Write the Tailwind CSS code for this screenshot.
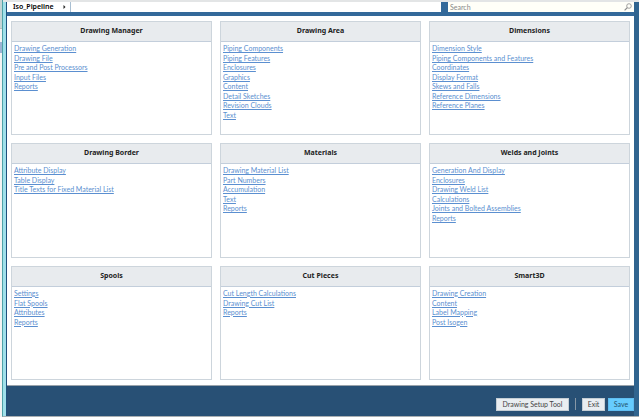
<!DOCTYPE html>
<html lang="en">
<head>
    <meta charset="UTF-8">
    <title>Iso_Pipeline | Drawing Setup</title>
    <script src="https://cdn.jsdelivr.net/npm/@tailwindcss/browser@4"></script>
</head>
<body class="flex h-screen overflow-hidden bg-white font-['Lato','Noto_Sans',sans-serif] text-[7px] text-[#222]">

    <!-- edge of the parent window -->
    <div class="flex w-[2px] shrink-0 flex-col bg-[#f4f4f4]">
        <div class="h-[29px] border-b border-[#bbb] bg-[#c5d5d6]"></div>
        <div class="h-[13px]"></div>
        <div class="h-[11px] bg-[#9db3d4]"></div>
    </div>

    <div class="flex min-w-0 flex-1 flex-col border-b border-l border-b-[#a9afb3] border-l-[#4fa3a8]">
        <div class="h-[2px] shrink-0 bg-[#e3e5e6]"></div>

        <div class="flex min-h-0 flex-1 border-l-3 border-[#a0e0ea]">
            <div class="flex min-w-0 flex-1 flex-col border-l border-r-5 border-l-[#1f4f7c] border-r-[#30648f]">

                <header class="flex h-[14px] shrink-0 items-start bg-[#33699a]">
                    <nav class="flex h-[10px] flex-1 bg-white">
                        <a href="#" class="flex w-[64px] items-center justify-between border-r border-[#a9bfd2] pr-1 pl-[6px] font-['Noto_Sans',sans-serif] font-semibold leading-[8px] text-black">
                            Iso_Pipeline
                            <svg class="h-[4px] w-[3px]" viewBox="0 0 3 4"><path d="M0.5 0 L2.5 2 L0.5 4 Z" fill="#222"/></svg>
                        </a>
                    </nav>
                    <label class="ml-[7px] flex h-[10px] w-[186px] items-center bg-[#fffff8] px-[2px]">
                        <input type="search" aria-label="Search" placeholder="Search" class="h-[10px] min-w-0 flex-1 leading-[10px] outline-none placeholder:text-[#888]">
                        <svg class="h-[8px] w-[8px]" viewBox="0 0 8 8" fill="none" stroke="#8b8b8b">
                            <circle cx="5" cy="3" r="2.3" stroke-width="0.8"/>
                            <path d="M3.3 4.7 L0.6 7.4" stroke-width="1.2"/>
                        </svg>
                    </label>
                </header>

                <main id="groups" class="grid min-h-0 flex-1 grid-cols-3 grid-rows-3 gap-2 border-b border-[#9aa3ab] bg-white px-1 py-[5px]"></main>

                <footer class="flex h-[30px] shrink-0 items-center justify-end bg-[#285075] pt-[6px]">
                    <button class="h-[13px] w-[73px] border border-[#c4cdd4] bg-[#e9edf1] leading-[11px] text-[#444]">Drawing Setup Tool</button>
                    <div class="mx-[6px] h-[12px] w-px bg-[#8797a6]"></div>
                    <button class="h-[13px] w-[23px] border border-[#c4cdd4] bg-[#e9edf1] leading-[11px] text-[#444]">Exit</button>
                    <button class="ml-[3px] h-[13px] w-[26px] border border-[#5fbdf2] bg-[#66ccff] leading-[11px] text-[#24536f]">Save</button>
                </footer>
            </div>
        </div>
    </div>

    <script>
        const groups = [
            ["Drawing Manager", ["Drawing Generation", "Drawing File", "Pre and Post Processors", "Input Files", "Reports"]],
            ["Drawing Area", ["Piping Components", "Piping Features", "Enclosures", "Graphics", "Content", "Detail Sketches", "Revision Clouds", "Text"]],
            ["Dimensions", ["Dimension Style", "Piping Components and Features", "Coordinates", "Display Format", "Skews and Falls", "Reference Dimensions", "Reference Planes"]],
            ["Drawing Border", ["Attribute Display", "Table Display", "Title Texts for Fixed Material List"]],
            ["Materials", ["Drawing Material List", "Part Numbers", "Accumulation", "Text", "Reports"]],
            ["Welds and Joints", ["Generation And Display", "Enclosures", "Drawing Weld List", "Calculations", "Joints and Bolted Assemblies", "Reports"]],
            ["Spools", ["Settings", "Flat Spools", "Attributes", "Reports"]],
            ["Cut Pieces", ["Cut Length Calculations", "Drawing Cut List", "Reports"]],
            ["Smart3D", ["Drawing Creation", "Content", "Label Mapping", "Post Isogen"]]
        ];

        document.getElementById("groups").innerHTML = groups.map(([title, links]) => `
            <section class="min-h-0 border border-[#cdd5dc]">
                <h2 class="h-[20px] border-b border-[#c3cedb] bg-[#e8ebee] text-center font-['Noto_Sans',sans-serif] font-bold leading-[18px]">${title}</h2>
                <ul class="grid auto-rows-[10px_9px] px-[2px] pt-[2px] leading-[9px]">
                    ${links.map(link => `<li><a href="#" class="text-[#5b8fd0] underline">${link}</a></li>`).join("")}
                </ul>
            </section>`).join("");
    </script>
</body>
</html>
